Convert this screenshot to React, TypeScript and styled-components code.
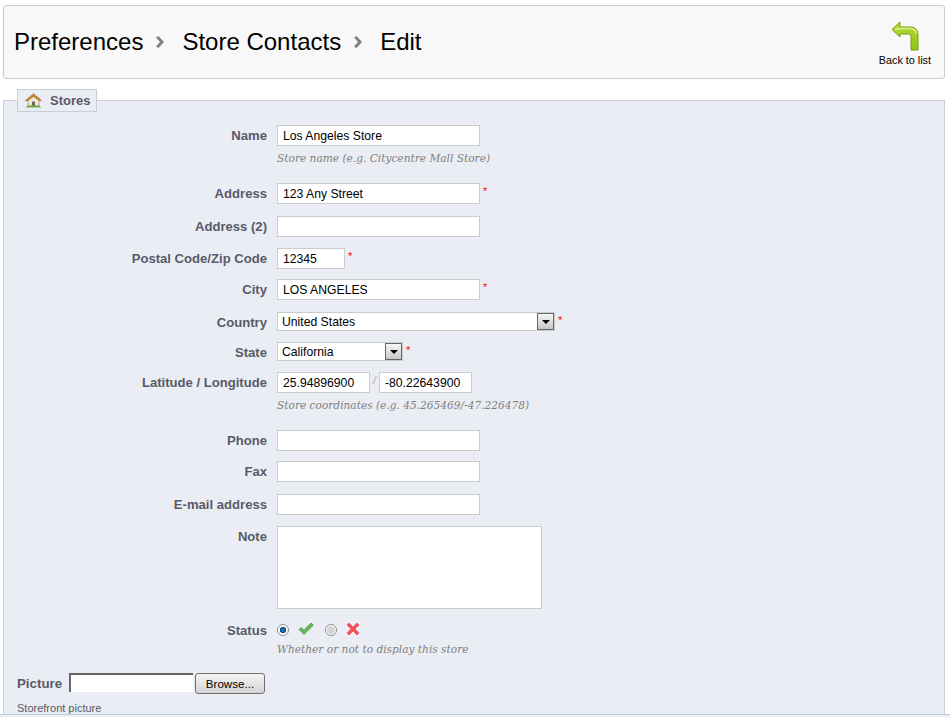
import React from "react";
import styled, { createGlobalStyle } from "styled-components";

const Global = createGlobalStyle`
  html, body { margin: 0; padding: 0; background: #fff; height: 717px; overflow: hidden; }
  body { font-family: "Liberation Sans", Arial, sans-serif; }
  * { box-sizing: border-box; }
`;
const Page = styled.div`
  width: 950px; height: 717px; padding: 5px 5px 0 3px; overflow: hidden; position: relative;
`;
const Toolbar = styled.header`
  height: 74px; border: 1px solid #ccc; border-radius: 3px; background: #f8f8f8;
  display: flex; align-items: center; justify-content: space-between; padding: 0 13px 0 10px;
`;
const Crumbs = styled.h1`
  margin: 0; font-weight: 400; font-size: 24px; color: #000; display: flex; align-items: center;
`;
const Sep = styled.span`
  display: inline-flex; width: 39px; padding-left: 13px;
`;
const BackLink = styled.a`
  display: flex; flex-direction: column; align-items: center; font-size: 10.8px; color: #000; gap: 3px; margin-top: 3px;
`;
const Panel = styled.fieldset`
  margin: 10px 0 0; padding: 13px 0 0 13px; border: 1px solid #ccced7; background: #ebedf4; min-width: 0; height: 640px;
`;
const Legend = styled.legend`
  padding: 0 6px 0 7px; border: 1px solid #ccced7; height: 23px; background: #ebedf4;
  font-weight: 700; font-size: 13px; color: #585a69; display: flex; align-items: center; gap: 8px; margin-left: 0;
`;
const Row = styled.div<{ $mb: number }>`
  display: flex; align-items: flex-start; margin-bottom: ${p => p.$mb}px;
`;
const Label = styled.label`
  width: 260px; padding-right: 10px; text-align: right; font-weight: 700; font-size: 13.1px; color: #585a69; line-height: 22px; flex: none;
`;
const Field = styled.div`
  display: flex; align-items: flex-start; flex-wrap: wrap; width: 600px;
`;
const Input = styled.div<{ $w: number }>`
  width: ${p => p.$w}px; height: 21px; border: 1px solid #ccc; background: #fff; font-size: 12.2px; color: #000; line-height: 20px; padding-left: 5px;
`;
const Area = styled.div`
  width: 265px; height: 83px; border: 1px solid #ccc; background: #fff;
`;
const Req = styled.sup`
  color: #f00; font-size: 11px; line-height: 12px; margin-left: 3px; vertical-align: baseline; position: relative; top: 2px;
`;
const Select = styled.div<{ $w: number }>`
  width: ${p => p.$w}px; height: 19px; border: 1px solid #ccc; background: #fff; font-size: 12.2px; line-height: 18px; padding-left: 4px; color: #000;
  display: flex; justify-content: space-between;
`;
const Drop = styled.span`
  width: 17px; height: 17px; border: 1px solid #666; background: linear-gradient(#f6f6f6, #c8c8c8); display: flex; align-items: center; justify-content: center;
`;
const Slash = styled.span`
  color: #999; font-size: 10px; font-style: italic; width: 9px; text-align: center; line-height: 18px;
`;
const Hint = styled.p<{ $mt?: number }>`
  margin: ${p => p.$mt ?? 5}px 0 0; width: 100%; font-family: "DejaVu Serif", Georgia, serif; font-style: italic; font-size: 10.6px; color: #7f7f7f; line-height: 14px;
`;
const Radio = styled.span<{ $on?: boolean }>`
  width: 12px; height: 12px; border-radius: 50%; margin-top: 4px; border: 1px solid #8f8f8f;
  background: ${p => p.$on
    ? "radial-gradient(circle, #1a6fb0 0 28%, #06365f 40%, #fff 48%, #eee 100%)"
    : "radial-gradient(circle, #d4d4d4 0 50%, #fff 62%, #eee 100%)"};
`;
const StatusIcon = styled.svg`
  margin: 2px 11px 0 9px;
`;
const PicRow = styled.div`
  display: flex; align-items: flex-start; height: 21px;
`;
const PicLabel = styled.label`
  font-weight: 700; font-size: 13.3px; color: #585a69; width: 52px; line-height: 21px;
`;
const FileInput = styled.div`
  width: 124px; height: 19px; background: #fff; border-top: 2px solid #666; border-left: 2px solid #666;
`;
const Browse = styled.button`
  width: 70px; height: 21px; margin-left: 2px; border: 1px solid #707070; border-radius: 3px; background: linear-gradient(#f4f4f4, #d4d4d4); font: 11.6px "Liberation Sans", Arial, sans-serif; color: #000; padding: 0;
`;
const Small = styled.p`
  margin: 8px 0 0; font-size: 11px; color: #585a69; line-height: 12px;
`;
const BottomLine = styled.div`
  position: absolute; left: 0; right: 0; top: 714px; height: 3px; background: #ebedf4; border-top: 1px solid #b9d0e4;
`;

const Chevron = () => (
  <svg width="9" height="12" viewBox="0 0 9 12"><path d="M0 1.500 L2.500 0 L8 6 L2.500 12 L0 10.500 L4 6 Z" fill="#808080" /></svg>
);
const BackArrow = () => (
  <svg width="28" height="30" viewBox="0 0 28 30">
    <defs>
      <linearGradient id="arrowFill" x1="0" y1="0" x2="0" y2="1">
        <stop offset="0" stopColor="#b6dc3a" />
        <stop offset="1" stopColor="#8fc414" />
      </linearGradient>
    </defs>
    <path d="M1 8.500 L9 1 L9 6 L19 6 Q27 6 27 14 L27 29 L20 29 L20 15 Q20 13 18 13 L9 13 L9 16 Z" fill="url(#arrowFill)" stroke="#7a9c18" strokeWidth="1" strokeLinejoin="round" />
    <path d="M4 8.500 L10 7.500 L19 7.500 Q25 7.500 25.500 13" fill="none" stroke="#dcf08a" strokeWidth="1.500" />
  </svg>
);
const House = () => (
  <svg width="17" height="15" viewBox="0 0 17 15">
    <path d="M3 7 L8.500 2.500 L14 7 L14 13 L3 13 Z" fill="#f3ead6" stroke="#a08a60" strokeWidth="0.7" />
    <path d="M0.500 7.500 L8.500 0.800 L16.500 7.500 L14.500 7.800 L8.500 3.500 L2.500 7.800 Z" fill="#c8853b" stroke="#9a6225" strokeWidth="0.6" />
    <rect x="7" y="8.500" width="3" height="4.500" fill="#6d6a62" />
    <path d="M0.500 14.500 L3 12.500 L14 12.500 L16.500 14.500 Z" fill="#6cae3e" />
  </svg>
);
const Check = () => (
  <StatusIcon width="16" height="14" viewBox="0 0 16 14">
    <path d="M1 7.500 L3.500 5.500 L6 8 L13 1 L15.500 3 L6 12.500 Z" fill="#66b85c" stroke="#4a9a44" strokeWidth="0.7" strokeLinejoin="round" />
  </StatusIcon>
);
const Cross = () => (
  <StatusIcon width="14" height="14" viewBox="0 0 14 14">
    <path d="M1 3 L3 1 L7 5 L11 1 L13 3 L9 7 L13 11 L11 13 L7 9 L3 13 L1 11 L5 7 Z" fill="#f6525a" stroke="#f0444c" strokeWidth="0.7" strokeLinejoin="round" />
  </StatusIcon>
);
const Tri = () => <svg width="8" height="4" viewBox="0 0 8 4"><path d="M0 0 H8 L4 4 Z" fill="#000" /></svg>;

export default function App() {
  return (
    <Page>
      <Global />
      <Toolbar>
        <Crumbs>
          Preferences<Sep><Chevron /></Sep>Store Contacts<Sep><Chevron /></Sep>Edit
        </Crumbs>
        <BackLink><BackArrow />Back to list</BackLink>
      </Toolbar>
      <Panel>
        <Legend><House />Stores</Legend>
        <Row $mb={18}>
          <Label>Name</Label>
          <Field><Input $w={203}>Los Angeles Store</Input><Hint>Store name (e.g. Citycentre Mall Store)</Hint></Field>
        </Row>
        <Row $mb={11}>
          <Label>Address</Label>
          <Field><Input $w={203}>123 Any Street</Input><Req>*</Req></Field>
        </Row>
        <Row $mb={10}>
          <Label>Address (2)</Label>
          <Field><Input $w={203} /></Field>
        </Row>
        <Row $mb={9}>
          <Label>Postal Code/Zip Code</Label>
          <Field><Input $w={68}>12345</Input><Req>*</Req></Field>
        </Row>
        <Row $mb={11}>
          <Label>City</Label>
          <Field><Input $w={203}>LOS ANGELES</Input><Req>*</Req></Field>
        </Row>
        <Row $mb={8}>
          <Label>Country</Label>
          <Field><Select $w={278}>United States<Drop><Tri /></Drop></Select><Req>*</Req></Field>
        </Row>
        <Row $mb={8}>
          <Label>State</Label>
          <Field><Select $w={126}>California<Drop><Tri /></Drop></Select><Req>*</Req></Field>
        </Row>
        <Row $mb={18}>
          <Label>Latitude / Longitude</Label>
          <Field>
            <Input $w={93}>25.94896900</Input><Slash>/</Slash><Input $w={93}>-80.22643900</Input>
            <Hint>Store coordinates (e.g. 45.265469/-47.226478)</Hint>
          </Field>
        </Row>
        <Row $mb={9}><Label>Phone</Label><Field><Input $w={203} /></Field></Row>
        <Row $mb={11}><Label>Fax</Label><Field><Input $w={203} /></Field></Row>
        <Row $mb={10}><Label>E-mail address</Label><Field><Input $w={203} /></Field></Row>
        <Row $mb={11}><Label>Note</Label><Field><Area /></Field></Row>
        <Row $mb={17}>
          <Label>Status</Label>
          <Field><Radio $on /><Check /><Radio /><Cross /><Hint $mt={6}>Whether or not to display this store</Hint></Field>
        </Row>
        <PicRow><PicLabel>Picture</PicLabel><FileInput /><Browse>Browse...</Browse></PicRow>
        <Small>Storefront picture</Small>
      </Panel>
      <BottomLine />
    </Page>
  );
}
